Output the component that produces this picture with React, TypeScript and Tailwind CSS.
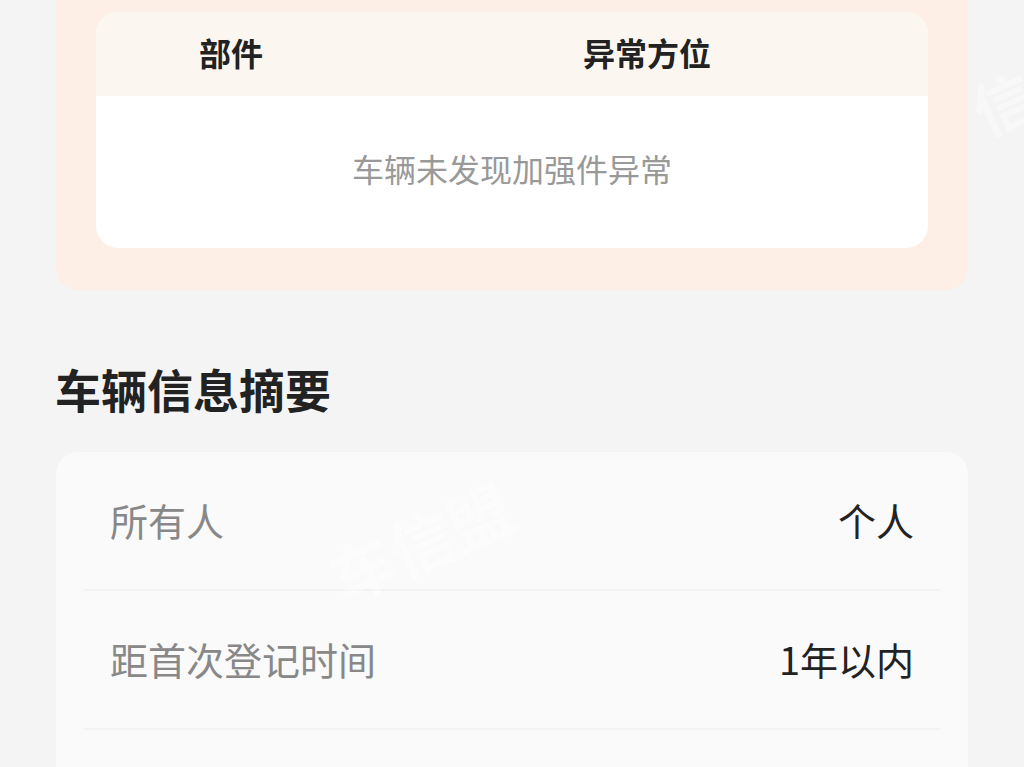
import React from 'react';

const rows = [
  { label: '所有人', value: '个人' },
  { label: '距首次登记时间', value: '1年以内' },
];

const App: React.FC = () => {
  return (
    <div
      className="relative w-[1024px] h-[767px] overflow-hidden bg-[#f4f4f4]"
      style={{ fontFamily: '"Noto Sans CJK SC", "Noto Sans", sans-serif' }}
    >
      {/* 加强件异常 */}
      <div className="mx-[56px] pt-[12px] pb-[42px] px-[40px] bg-[#fdefe6] rounded-b-[22px]">
        <div className="bg-white rounded-[22px] overflow-hidden">
          <div className="grid grid-cols-[270px_1fr] h-[84px] items-center pb-[4px] bg-[#fcf6f0] text-[32px] font-bold text-[#222]">
            <div className="text-center">部件</div>
            <div className="text-center">异常方位</div>
          </div>
          <div className="h-[152px] flex items-center justify-center pb-[8px] text-[32px] text-[#999]">
            车辆未发现加强件异常
          </div>
        </div>
      </div>

      <h2 className="mt-[66px] ml-[55px] text-[46px] leading-[64px] font-bold text-[#222]">车辆信息摘要</h2>

      <div className="relative mt-[32px] mx-[56px] px-[28px] pb-[80px] bg-[#fafafa] rounded-[22px]">
        {rows.map((r) => (
          <div
            key={r.label}
            className="h-[139px] flex items-center justify-between px-[26px] pb-[2px] border-b-2 border-[#f2f2f2] text-[38px]"
          >
            <span className="text-[#888]">{r.label}</span>
            <span className="text-[#222]">{r.value}</span>
          </div>
        ))}
        {/* 水印 */}
        <div className="absolute left-[268px] top-[40px] -rotate-[24deg] text-[64px] font-bold text-white/40 select-none pointer-events-none">
          车信盟
        </div>
      </div>

      <div className="absolute left-[972px] top-[56px] -rotate-[24deg] text-[60px] font-bold text-white/40 select-none pointer-events-none">
        信
      </div>
    </div>
  );
};

export default App;
